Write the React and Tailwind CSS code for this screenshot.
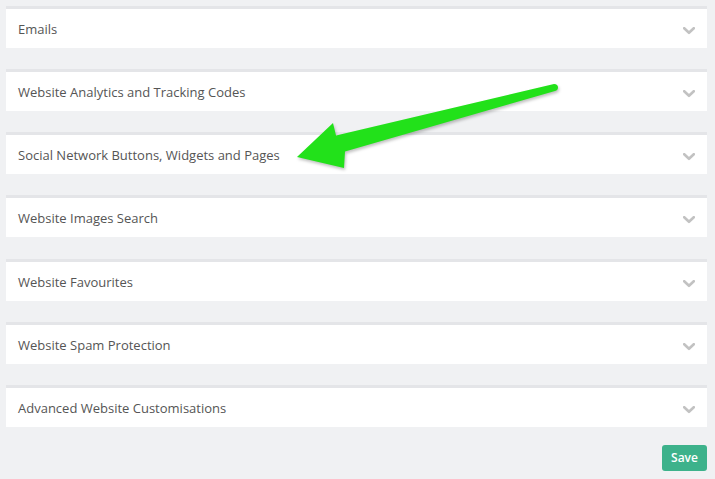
const sections = [
  'Emails',
  'Website Analytics and Tracking Codes',
  'Social Network Buttons, Widgets and Pages',
  'Website Images Search',
  'Website Favourites',
  'Website Spam Protection',
  'Advanced Website Customisations',
];

const Chevron = () => (
  <svg width="12" height="8" viewBox="0 0 12 8" className="mt-[2px]">
    <polyline points="1.2,1.2 6,5.8 10.8,1.2" fill="none" stroke="#c2c2c2" strokeWidth="2.6" strokeLinecap="round" strokeLinejoin="round" />
  </svg>
);

const Arrow = () => (
  <svg className="absolute left-0 top-0 pointer-events-none" width="715" height="479" style={{ filter: 'drop-shadow(1px 2px 1.5px rgba(0,0,0,0.25))' }}>
    <path
      d="M297 157 L333 123 L336 135.5 L554 84 Q558 84 558 87.5 Q558 90 555 91 L345 151.5 L344 168 Z"
      fill="#22e11a"
    />
  </svg>
);

export default function App() {
  return (
    <div className="relative min-h-[479px] w-[715px] bg-[#f0f1f3] pl-[6px] pr-[8px] pt-[6px]" style={{ fontFamily: '"Open Sans", "Liberation Sans", sans-serif' }}>
      <div className="flex flex-col gap-[21px]">
        {sections.map((title, i) => (
          <div key={title} className={`border-t-[3px] border-[#e4e5e8] bg-white ${i === 4 ? 'mt-[1px]' : ''}`}>
            <div className="flex h-[39px] items-center justify-between pl-[12px] pr-[12px] pt-[2px]">
              <span className="text-[13px] text-[#555555]">{title}</span>
              <Chevron />
            </div>
          </div>
        ))}
      </div>
      <div className="mt-[18px] flex justify-end">
        <button className="h-[26px] w-[45px] rounded-[3px] bg-[#3db28b] text-[12px] font-semibold text-white">
          Save
        </button>
      </div>
      <Arrow />
    </div>
  );
}
